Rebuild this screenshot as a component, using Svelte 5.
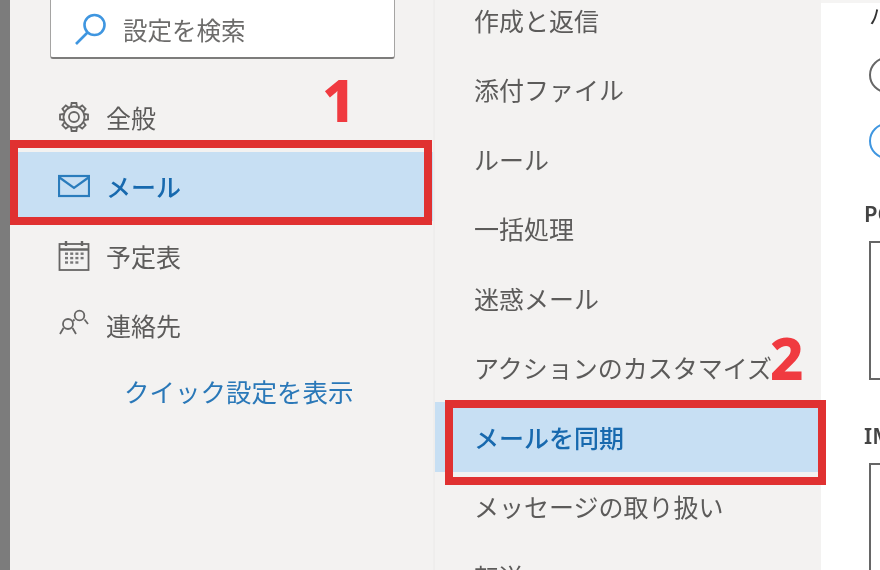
<script>
  const nav = [
    { label: '全般', icon: 'gear' },
    { label: 'メール', icon: 'mail', active: true },
    { label: '予定表', icon: 'calendar' },
    { label: '連絡先', icon: 'people' }
  ];

  const sections = [
    { label: '作成と返信' },
    { label: '添付ファイル' },
    { label: 'ルール' },
    { label: '一括処理' },
    { label: '迷惑メール' },
    { label: 'アクションのカスタマイズ' },
    { label: 'メールを同期', active: true },
    { label: 'メッセージの取り扱い' },
    { label: '転送' }
  ];

  const teeth = [0, 45, 90, 135, 180, 225, 270, 315];
  const dots = [];
  for (let r = 0; r < 3; r++) {
    for (let c = 0; c < 4; c++) {
      if (r === 2 && c === 3) continue;
      dots.push({ x: 7 + c * 5.2, y: 12.5 + r * 4.4 });
    }
  }
</script>

<div class="page">
  <div class="strip"></div>

  <aside class="nav">
    <div class="search">
      <svg class="search-icon" viewBox="0 0 34 34" width="34" height="34">
        <circle cx="20.5" cy="13" r="10" />
        <path d="M13.5 20.5 2 32" />
      </svg>
      <span>設定を検索</span>
    </div>

    <ul class="nav-list">
      {#each nav as item}
        <li class="nav-item" class:active={item.active}>
          {#if item.icon === 'gear'}
            <svg class="icon" viewBox="0 0 32 32" width="32" height="32">
              <circle cx="16" cy="16" r="5" />
              <circle cx="16" cy="16" r="10.5" />
              {#each teeth as a}
                <path d="M13 5.8 13.6 2h4.8l.6 3.8" transform="rotate({a} 16 16)" />
              {/each}
            </svg>
          {:else if item.icon === 'mail'}
            <svg class="icon" viewBox="0 0 32 32" width="32" height="32">
              <rect x="1" y="6" width="30" height="20" />
              <path d="M1.5 7.5 16 18 30.500 7.5" />
            </svg>
          {:else if item.icon === 'calendar'}
            <svg class="icon" viewBox="0 0 32 32" width="32" height="32">
              <rect x="1.500" y="4" width="29" height="26" />
              <path class="thick" d="M1.500 9.500h29M8 1v5M24 1v5" />
              {#each dots as d}
                <rect class="dot" x={d.x} y={d.y} width="3" height="2.400" />
              {/each}
            </svg>
          {:else}
            <svg class="icon" viewBox="0 0 32 32" width="32" height="32">
              <circle cx="21.500" cy="6.500" r="4.800" />
              <path d="M26.500 10.500 30 15M16.500 10.500 15 12" />
              <circle cx="10" cy="15" r="5" />
              <path d="M5.500 19 2 25M14.500 19 18 25" />
            </svg>
          {/if}
          <span>{item.label}</span>
        </li>
      {/each}
    </ul>

    <div class="quick">クイック設定を表示</div>
  </aside>

  <nav class="sections">
    {#each sections as s}
      <div class="section" class:active={s.active}>{s.label}</div>
    {/each}
  </nav>

  <main class="content">
    <div class="title">ハ</div>
    <div class="radio"></div>
    <div class="radio on"></div>
    <div class="label first">POP</div>
    <div class="box first"></div>
    <div class="label second">IMAP</div>
    <div class="box second"></div>
  </main>

  <div class="callout one"></div>
  <div class="callout two"></div>
  <div class="num one">1</div>
  <div class="num two">2</div>
</div>

<style>
  :global(body) {
    margin: 0;
    background: #fff;
  }

  .page {
    position: relative;
    display: grid;
    grid-template-columns: 10px 424px 387px 1fr;
    width: 880px;
    height: 570px;
    overflow: hidden;
    font-family: "Noto Sans CJK JP", "Noto Sans", sans-serif;
    color: #5c5b5a;
  }

  .strip {
    background: #7c7c7c;
  }

  .nav,
  .sections,
  .content {
    filter: blur(0.7px);
  }

  .nav {
    background: #f3f2f1;
    border-right: 1px solid #efeeed;
  }

  .search {
    display: flex;
    align-items: center;
    gap: 15px;
    box-sizing: border-box;
    width: 345px;
    height: 62px;
    margin: -3px 0 0 40px;
    padding: 3px 0 0 23px;
    background: #fff;
    border: 1px solid #a5a4a3;
    border-bottom: 2px solid #7d7c7b;
    border-radius: 3px;
    font-size: 24.500px;
    color: #6d6c6b;
  }

  .search-icon {
    fill: none;
    stroke: #3f96e0;
    stroke-width: 2.600;
  }

  .nav-list {
    list-style: none;
    margin: 23px 0 0;
    padding: 0;
  }

  .nav-item {
    display: flex;
    align-items: center;
    gap: 16px;
    height: 69.500px;
    margin-left: 8px;
    padding-left: 40px;
    font-size: 25px;
  }

  .nav-item.active {
    background: #c7dff3;
    color: #1769ae;
    font-weight: 500;
  }

  .icon {
    flex: none;
    fill: none;
    stroke: #666564;
    stroke-width: 1.800;
  }

  .nav-item.active .icon {
    stroke: #2a7cbc;
    stroke-width: 2.200;
  }

  .icon .thick {
    stroke-width: 2.400;
  }

  .icon .dot {
    fill: #777;
    stroke: none;
  }

  .quick {
    margin: 12px 0 0 114px;
    font-size: 25.500px;
    line-height: 38px;
    color: #2a78b8;
    white-space: nowrap;
  }

  .sections {
    margin-top: -15px;
    background: #f3f2f1;
    border-left: 1px solid #eeedec;
  }

  .section {
    display: flex;
    align-items: center;
    height: 69.500px;
    padding-left: 39px;
    font-size: 25px;
    white-space: nowrap;
  }

  .section.active {
    background: #c7dff3;
    color: #1769ae;
    font-weight: 500;
  }

  .content {
    position: relative;
    padding-left: 48px;
    overflow: hidden;
    border-top: 3px solid #f5f4f3;
  }

  .title {
    height: 0;
    font-size: 22px;
    line-height: 22px;
    color: #333;
  }

  .radio {
    box-sizing: border-box;
    width: 36px;
    height: 36px;
    margin-top: 30px;
    border: 2px solid #666;
    border-radius: 50%;
  }

  .radio:nth-of-type(2) {
    margin-top: 54px;
  }

  .radio.on {
    border-color: #3f96e0;
    margin-top: 30px;
  }

  .label {
    margin: 0 0 0 -5px;
    font-family: "Noto Sans", sans-serif;
    font-weight: 600;
    font-size: 22px;
    line-height: 28px;
    white-space: nowrap;
    color: #444;
  }

  .label.first {
    margin-top: 40px;
  }

  .label.second {
    margin-top: 41px;
  }

  .box {
    box-sizing: border-box;
    width: 200px;
    margin-top: 14px;
    border: 2px solid #666;
  }

  .box.first {
    height: 139px;
  }

  .box.second {
    height: 200px;
  }

  .callout {
    position: absolute;
    box-sizing: border-box;
    border: 8.500px solid #e03131;
    filter: blur(0.3px);
  }

  .callout.one {
    left: 10px;
    top: 140px;
    width: 422px;
    height: 85px;
  }

  .callout.two {
    left: 445px;
    top: 400px;
    width: 381px;
    height: 85px;
  }

  .num {
    position: absolute;
    font-family: "Noto Sans", sans-serif;
    font-weight: 800;
    font-size: 58px;
    line-height: 58px;
    color: #f03a40;
    filter: blur(0.4px);
  }

  .num.one {
    left: 322px;
    top: 71px;
  }

  .num.two {
    left: 770px;
    top: 329px;
  }
</style>
